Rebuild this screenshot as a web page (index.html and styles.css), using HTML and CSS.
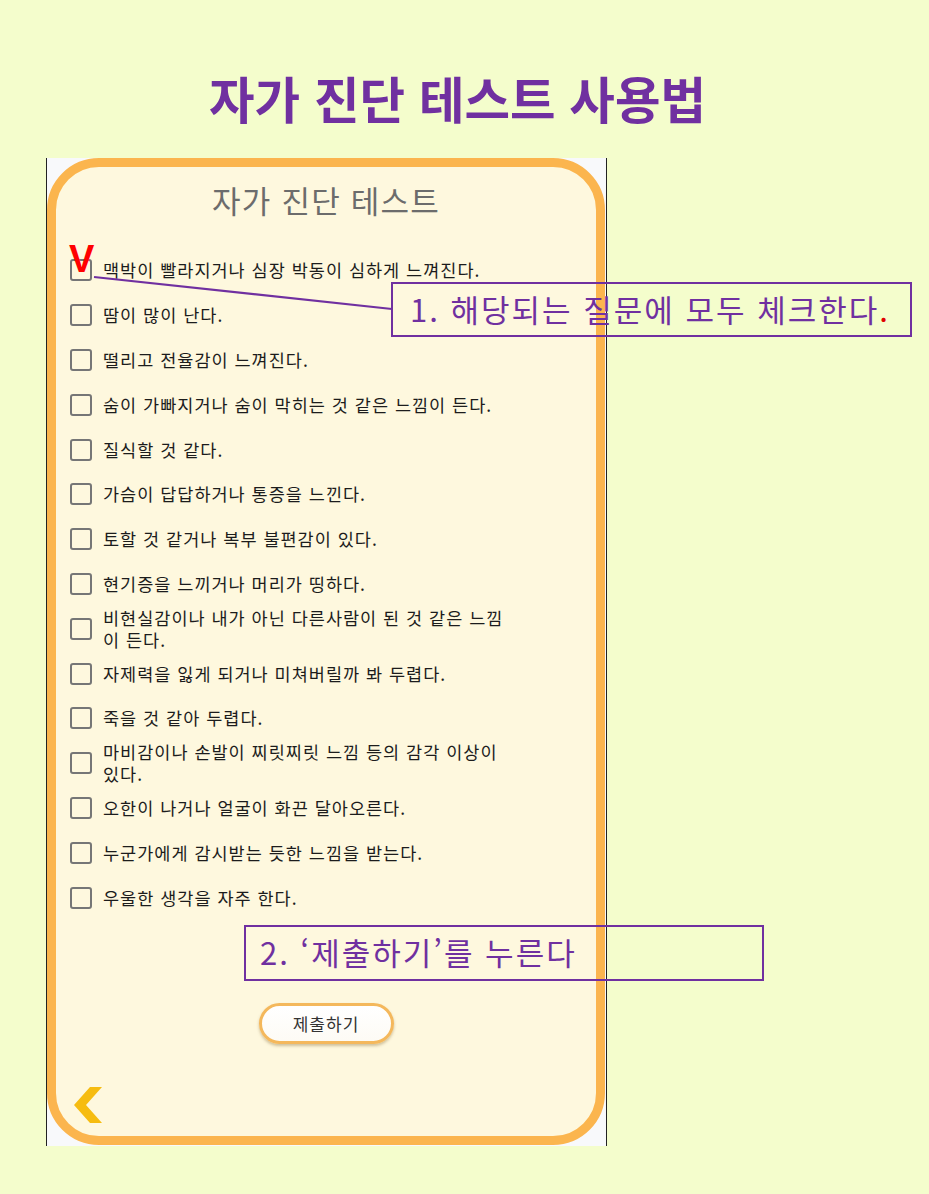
FILE: index.html
```html
<!DOCTYPE html>
<html lang="ko">
<head>
<meta charset="utf-8">
<title>자가 진단 테스트 사용법</title>
<link rel="stylesheet" href="styles.css">
</head>
<body>
<div class="page">
  <h1 class="heading">자가 진단 테스트 사용법</h1>
  <div class="phone">
    <div class="card">
      <h2 class="card-title">자가 진단 테스트</h2>
      <ul class="checklist">
        <li class="item"><span class="box"></span><span class="label">맥박이 빨라지거나 심장 박동이 심하게 느껴진다.</span></li>
        <li class="item"><span class="box"></span><span class="label">땀이 많이 난다.</span></li>
        <li class="item"><span class="box"></span><span class="label">떨리고 전율감이 느껴진다.</span></li>
        <li class="item"><span class="box"></span><span class="label">숨이 가빠지거나 숨이 막히는 것 같은 느낌이 든다.</span></li>
        <li class="item"><span class="box"></span><span class="label">질식할 것 같다.</span></li>
        <li class="item"><span class="box"></span><span class="label">가슴이 답답하거나 통증을 느낀다.</span></li>
        <li class="item"><span class="box"></span><span class="label">토할 것 같거나 복부 불편감이 있다.</span></li>
        <li class="item"><span class="box"></span><span class="label">현기증을 느끼거나 머리가 띵하다.</span></li>
        <li class="item"><span class="box"></span><span class="label">비현실감이나 내가 아닌 다른사람이 된 것 같은 느낌이 든다.</span></li>
        <li class="item"><span class="box"></span><span class="label">자제력을 잃게 되거나 미쳐버릴까 봐 두렵다.</span></li>
        <li class="item"><span class="box"></span><span class="label">죽을 것 같아 두렵다.</span></li>
        <li class="item"><span class="box"></span><span class="label">마비감이나 손발이 찌릿찌릿 느낌 등의 감각 이상이 있다.</span></li>
        <li class="item"><span class="box"></span><span class="label">오한이 나거나 얼굴이 화끈 달아오른다.</span></li>
        <li class="item"><span class="box"></span><span class="label">누군가에게 감시받는 듯한 느낌을 받는다.</span></li>
        <li class="item"><span class="box"></span><span class="label">우울한 생각을 자주 한다.</span></li>
      </ul>
      <div class="submit-row"><button class="submit" type="button">제출하기</button></div>
      <div class="back">
        <svg width="30" height="36" viewBox="0 0 30 36"><polygon points="17,0 29,0 13,18 29,36 17,36 1,18" fill="#f6bc10"/></svg>
      </div>
    </div>
  </div>

  <svg class="connector" width="929" height="1194" viewBox="0 0 929 1194"><line x1="94" y1="277" x2="392" y2="309" stroke="#7030a0" stroke-width="2.2"/></svg>
  <span class="check-mark">V</span>
  <div class="callout callout-1">1. 해당되는 질문에 모두 체크한다<span class="red">.</span></div>
  <div class="callout callout-2">2. ‘제출하기’를 누른다</div>
</div>
</body>
</html>
```

FILE: styles.css
```css
html, body {
  margin: 0;
  padding: 0;
  background: #f4fdcc;
}
body {
  font-family: "Noto Sans CJK KR", "Noto Sans", sans-serif;
}
.page {
  position: relative;
  width: 929px;
  height: 1194px;
  overflow: hidden;
}
.heading {
  margin: 0;
  height: 158px;
  box-sizing: border-box;
  padding: 68px 0 0 209px;
  font-size: 49.5px;
  line-height: 60px;
  font-weight: 700;
  color: #7030a0;
}
.phone {
  margin-left: 46px;
  width: 559px;
  height: 988px;
  background: #f8f9fb;
  border-left: 1px solid #222;
  border-right: 1px solid #222;
}
.card {
  width: 558px;
  height: 987px;
  box-sizing: border-box;
  border: 9px solid #fbb54e;
  border-radius: 52px;
  background: #fef8de;
  display: flex;
  flex-direction: column;
}
.card-title {
  margin: 15px 0 0;
  text-align: center;
  font-size: 31px;
  line-height: 36px;
  font-weight: 400;
  letter-spacing: 1.2px;
  color: #6c6c6c;
}
.checklist {
  list-style: none;
  margin: 30px 0 0;
  padding: 0 0 0 14px;
}
.item {
  height: 44.8px;
  display: flex;
  align-items: center;
  gap: 11px;
}
.box {
  flex: none;
  width: 22px;
  height: 22px;
  box-sizing: border-box;
  border: 2.5px solid #767676;
  border-radius: 3px;
}
.label {
  width: 408px;
  font-size: 17.5px;
  line-height: 22px;
  letter-spacing: 1px;
  color: #1c1c1c;
}
.submit-row {
  margin-top: 83px;
  display: flex;
  justify-content: center;
}
.submit {
  width: 135px;
  height: 41px;
  box-sizing: border-box;
  border: 3px solid #f4b85c;
  border-radius: 21px;
  background: linear-gradient(#ffffff, #fdfbf5);
  box-shadow: 0 2px 3px rgba(120, 90, 30, 0.35);
  font-family: "Noto Sans CJK KR", sans-serif;
  font-size: 17px;
  letter-spacing: 1px;
  color: #333;
  padding: 0;
}
.back {
  margin: 43px 0 0 17px;
  height: 36px;
}
.back svg {
  display: block;
}
.connector {
  position: absolute;
  left: 0;
  top: 0;
  pointer-events: none;
}
.check-mark {
  position: absolute;
  left: 69px;
  top: 239px;
  font-family: "Liberation Sans", sans-serif;
  font-weight: 700;
  font-size: 38px;
  line-height: 40px;
  color: #ff0000;
}
.callout {
  position: absolute;
  box-sizing: border-box;
  border: 2px solid #7030a0;
  color: #7030a0;
  font-size: 31px;
  line-height: 40px;
  letter-spacing: 2px;
  white-space: nowrap;
}
.callout-1 {
  left: 391px;
  top: 282px;
  width: 521px;
  height: 55px;
  padding: 5px 0 0 17px;
}
.callout-2 {
  left: 244px;
  top: 925px;
  width: 520px;
  height: 56px;
  padding: 5px 0 0 14px;
}
.red {
  color: #e00000;
}
```
